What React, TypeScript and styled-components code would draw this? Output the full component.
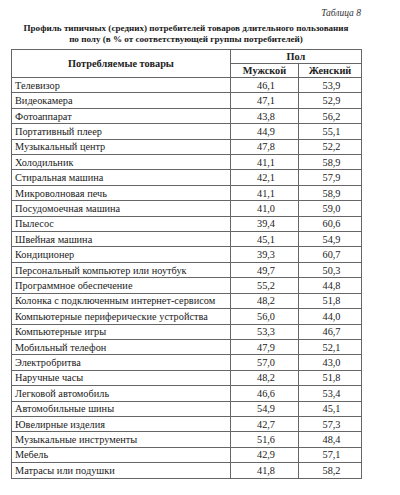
import styled, { createGlobalStyle } from 'styled-components'

const GlobalStyle = createGlobalStyle`
  html, body {
    margin: 0;
    padding: 0;
    background: #fff;
  }
  body {
    font-family: "Liberation Serif", "Times New Roman", serif;
    color: #222;
  }
`

const Page = styled.div`
  width: 400px;
  height: 495px;
  box-sizing: border-box;
  padding: 7px 39px 0 11px;
`

const Caption = styled.div`
  text-align: right;
  font-style: italic;
  font-size: 9.5px;
  line-height: 12px;
  color: #333;
`

const Title = styled.h1`
  margin: 4px -10px 0;
  text-align: center;
  font-size: 9.1px;
  line-height: 11px;
  font-weight: bold;
  white-space: nowrap;
  color: #1a1a1a;
`

const Table = styled.table`
  margin-top: 4px;
  width: 350px;
  border-collapse: collapse;
  table-layout: fixed;
  font-size: 10.3px;
  color: #222;
`

const HeadCell = styled.th`
  border: 1px solid #666;
  font-weight: bold;
  text-align: center;
  padding: 0;
  height: 13px;
  line-height: 13px;
`

const Row = styled.tr`
  height: 15.42px;
`

const Cell = styled.td<{ $num?: boolean }>`
  border: 1px solid #666;
  padding: 0 0 0 3px;
  line-height: 13px;
  text-align: ${(p) => (p.$num ? 'center' : 'left')};
  white-space: nowrap;
`

const rows: [string, string, string][] = [
  ['Телевизор', '46,1', '53,9'],
  ['Видеокамера', '47,1', '52,9'],
  ['Фотоаппарат', '43,8', '56,2'],
  ['Портативный плеер', '44,9', '55,1'],
  ['Музыкальный центр', '47,8', '52,2'],
  ['Холодильник', '41,1', '58,9'],
  ['Стиральная машина', '42,1', '57,9'],
  ['Микроволновая печь', '41,1', '58,9'],
  ['Посудомоечная машина', '41,0', '59,0'],
  ['Пылесос', '39,4', '60,6'],
  ['Швейная машина', '45,1', '54,9'],
  ['Кондиционер', '39,3', '60,7'],
  ['Персональный компьютер или ноутбук', '49,7', '50,3'],
  ['Программное обеспечение', '55,2', '44,8'],
  ['Колонка с подключенным интернет-сервисом', '48,2', '51,8'],
  ['Компьютерные периферические устройства', '56,0', '44,0'],
  ['Компьютерные игры', '53,3', '46,7'],
  ['Мобильный телефон', '47,9', '52,1'],
  ['Электробритва', '57,0', '43,0'],
  ['Наручные часы', '48,2', '51,8'],
  ['Легковой автомобиль', '46,6', '53,4'],
  ['Автомобильные шины', '54,9', '45,1'],
  ['Ювелирные изделия', '42,7', '57,3'],
  ['Музыкальные инструменты', '51,6', '48,4'],
  ['Мебель', '42,9', '57,1'],
  ['Матрасы или подушки', '41,8', '58,2'],
]

export default function App() {
  return (
    <Page>
      <GlobalStyle />
      <Caption>Таблица 8</Caption>
      <Title>
        Профиль типичных (средних) потребителей товаров длительного пользования
        <br />
        по полу (в % от соответствующей группы потребителей)
      </Title>
      <Table>
        <colgroup>
          <col style={{ width: 219 }} />
          <col style={{ width: 68 }} />
          <col style={{ width: 63 }} />
        </colgroup>
        <thead>
          <tr>
            <HeadCell rowSpan={2}>Потребляемые товары</HeadCell>
            <HeadCell colSpan={2}>Пол</HeadCell>
          </tr>
          <tr>
            <HeadCell>Мужской</HeadCell>
            <HeadCell>Женский</HeadCell>
          </tr>
        </thead>
        <tbody>
          {rows.map(([name, male, female]) => (
            <Row key={name}>
              <Cell>{name}</Cell>
              <Cell $num>{male}</Cell>
              <Cell $num>{female}</Cell>
            </Row>
          ))}
        </tbody>
      </Table>
    </Page>
  )
}
